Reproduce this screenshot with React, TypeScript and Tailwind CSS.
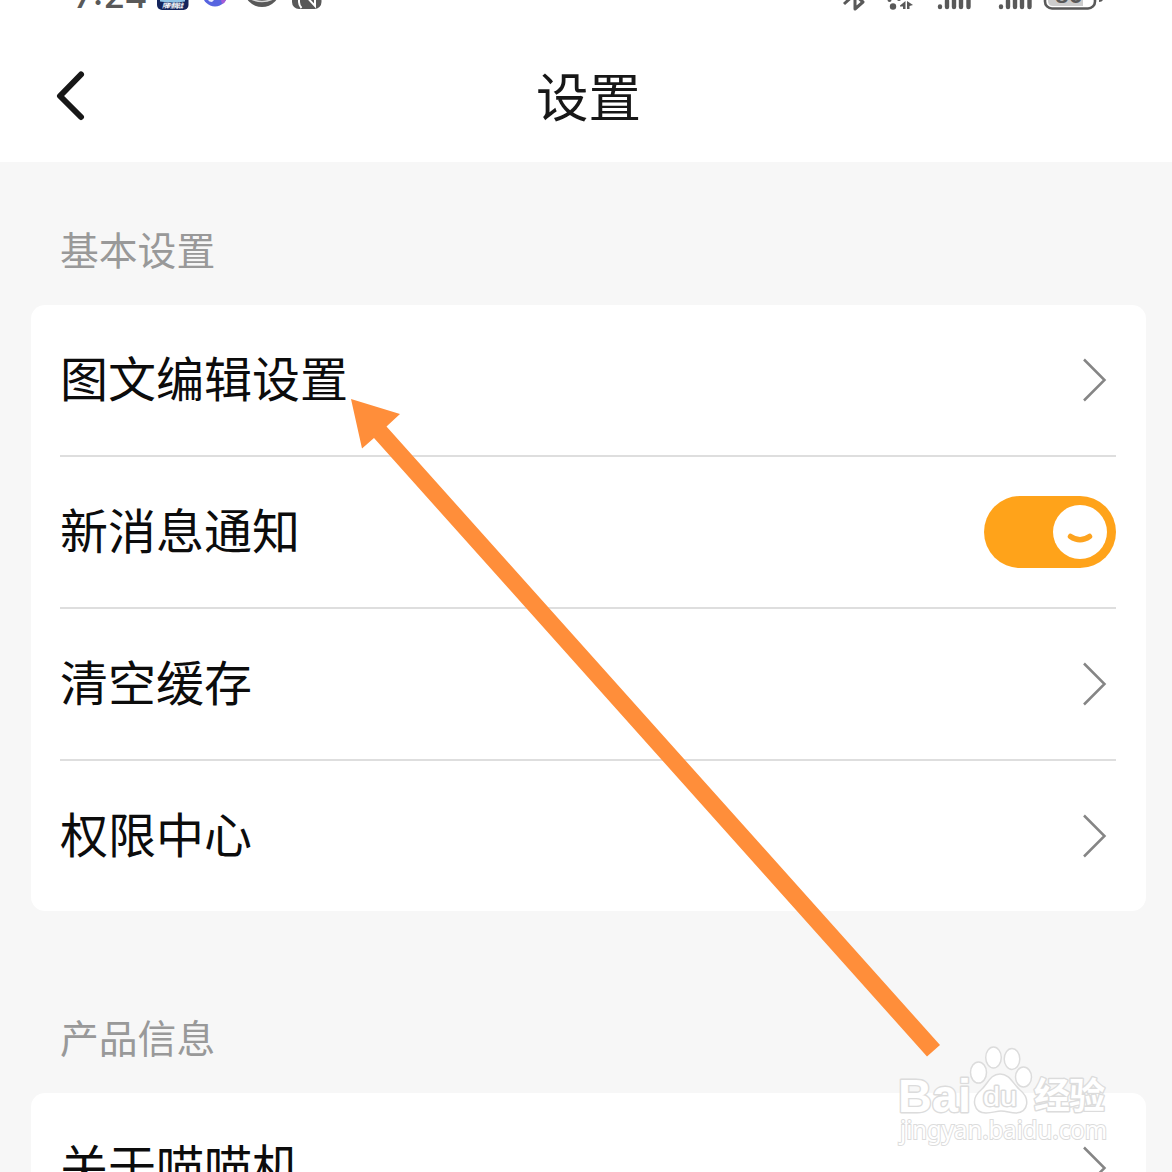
import type { ReactNode } from 'react';

function StatusBar() {
    return (
        <div className="flex h-[30px] shrink-0 justify-between overflow-hidden pl-[74px] pr-[68px] text-[#595959]">
            <div className="flex">
                <span className="-mt-[38px] w-[83px] whitespace-nowrap font-['Inter','Noto_Sans',sans-serif] text-[35px] font-medium leading-[66px]">
                    7:24
                </span>
                <svg width="166" height="30" viewBox="157 0 166 30">
                    <rect x="157" y="-22" width="31.500" height="32" rx="5" fill="#14245c" />
                    <path d="M160 0h25v1.500q-12 2-25 0z" fill="#8fc3e6" />
                    <text x="162" y="8" fontSize="6.500" fontWeight="700" fontStyle="italic" fill="#fff" fontFamily="Noto Sans CJK SC, sans-serif" textLength="21">
                        限时挑战
                    </text>
                    <circle cx="215" cy="-6" r="12.500" fill="#5764e0" />
                    <path d="M208 0h6l-2 2q-3 0-4-2z" fill="#e9ecff" />
                    <path d="M221 0h5q-1 3-4 4z" fill="#a45bd6" />
                    <circle cx="262" cy="-11" r="18" fill="#595959" />
                    <path d="M251 -1q11 5 22 0" fill="none" stroke="#d8d8d8" strokeWidth="1.500" />
                    <rect x="292" y="-20" width="29.500" height="29" rx="7" fill="#595959" />
                    <path d="M299 -6V2q0 3 2.500 6M304 -6L315 6V-6" fill="none" stroke="#fff" strokeWidth="2" />
                </svg>
            </div>
            <svg width="262" height="30" viewBox="842 0 262 30">
                <path d="M844 4L855 -6V9L863 2L855 -5" fill="none" stroke="#595959" strokeWidth="3" strokeLinejoin="round" />
                <g fill="#595959">
                    <circle cx="889.500" cy="0" r="2" />
                    <circle cx="899" cy="-1" r="2" />
                    <circle cx="893" cy="6.500" r="3.200" />
                    <path d="M900 5.500L905.500 1V9H903V6.500H900zM907 1l6 4-3.500 1V9h-2.500z" />
                </g>
                <g stroke="#595959" strokeWidth="4.400" strokeLinecap="round">
                    <path d="M940 6.500v.5M947 1v6M954 -3v10M961 -6v13M968.500 -8V7" />
                    <path d="M1001 6.500v.5M1008 1v6M1015 -3v10M1022 -6v13M1029.500 -8V7" />
                </g>
                <rect x="1045" y="-20" width="50" height="28.500" rx="7" fill="#fff" stroke="#595959" strokeWidth="2.600" />
                <path d="M1048 -5h35v11h-30q-5 0-5-5z" fill="#ccc" />
                <text x="1055" y="2.500" fontSize="21" fontWeight="700" fill="#595959" fontFamily="Inter, sans-serif">
                    80
                </text>
                <path d="M1099 -4h4v4q-1 2-4 2z" fill="#595959" />
            </svg>
        </div>
    );
}

function Chevron() {
    return (
        <svg width="26" height="44" viewBox="0 0 26 44" className="mr-[8px]" fill="none" stroke="#858585" strokeWidth="2.500">
            <path d="M2 1.500L22.500 22L2 42.500" />
        </svg>
    );
}

function Toggle() {
    return (
        <div className="flex h-[72px] w-[132px] items-center justify-end rounded-full bg-[#ffa31a] pr-[9px]">
            <div className="flex size-[54px] items-center justify-center rounded-full bg-white">
                <svg width="26" height="14" viewBox="0 0 26 14" className="mt-[13px]" fill="none" stroke="#fda31f" strokeWidth="5.500" strokeLinecap="round">
                    <path d="M3.500 4.500q9.500 6.500 19 0" />
                </svg>
            </div>
        </div>
    );
}

function SectionTitle({ children }: { children: ReactNode }) {
    return <h2 className="px-[60px] text-[38.800px] leading-[56px] text-[#999]">{children}</h2>;
}

function Row({ label, children, last = false }: { label: string; children: ReactNode; last?: boolean }) {
    return (
        <div className={last ? 'h-[152px]' : 'h-[152px] border-b-2 border-[#dedede]'}>
            <div className="flex h-[150px] items-center justify-between">
                <span className="pb-[8px] text-[48px] leading-[70px] text-[#0c0c0c]">{label}</span>
                {children}
            </div>
        </div>
    );
}

function Arrow() {
    return (
        <svg className="pointer-events-none absolute left-0 top-0" width="1172" height="1172" viewBox="0 0 1172 1172">
            <path d="M351 399L400 414L386.500 426.500L940 1045L927 1056.500L374 438L362 448.500Z" fill="#ff8e3a" />
        </svg>
    );
}

function Watermark() {
    return (
        <svg className="pointer-events-none absolute left-[890px] top-[1036px]" width="230" height="118" viewBox="890 1036 230 118">
            <g fill="#fff" stroke="#dcdcdc" strokeWidth="1.500">
                <ellipse cx="978.500" cy="1072.500" rx="8" ry="10.500" />
                <ellipse cx="993.500" cy="1057.500" rx="7.800" ry="10.500" />
                <ellipse cx="1012" cy="1059" rx="7.800" ry="10.500" />
                <ellipse cx="1023.500" cy="1077" rx="8" ry="10" />
                <path d="M1000 1074C990 1074 988 1084 981 1090C970 1099 974 1113 986 1113C993 1113 996 1111 1001 1111C1007 1111 1010 1113 1016 1113C1029 1112 1030 1098 1020 1090C1013 1084 1010 1074 1000 1074Z" />
                <g strokeWidth="2.800" paintOrder="stroke" strokeLinejoin="round">
                    <text x="898" y="1111.500" fontSize="47" fontWeight="700" fontFamily="Liberation Sans, sans-serif" textLength="73" lengthAdjust="spacingAndGlyphs">
                        Bai
                    </text>
                    <text x="983" y="1106" fontSize="27" fontFamily="Liberation Sans, sans-serif" textLength="34" lengthAdjust="spacingAndGlyphs">
                        du
                    </text>
                    <text x="1034" y="1109" fontSize="36" fontWeight="700" fontFamily="Noto Sans CJK SC, sans-serif" textLength="71">
                        经验
                    </text>
                </g>
                <text x="900" y="1139" fontSize="25" strokeWidth="2" paintOrder="stroke" fontFamily="Noto Sans, sans-serif" textLength="207" lengthAdjust="spacingAndGlyphs">
                    jingyan.baidu.com
                </text>
            </g>
        </svg>
    );
}

export default function App() {
    return (
        <div className="relative flex h-[1172px] w-[1172px] flex-col overflow-hidden bg-[#f7f7f7] font-['Noto_Sans_CJK_SC',sans-serif]">
            <header className="flex h-[162px] shrink-0 flex-col bg-white">
                <StatusBar />
                <div className="grid grid-cols-[1fr_auto_1fr] items-center pl-[5px] pt-[26px]">
                    <svg width="32" height="52" viewBox="0 0 32 52" className="ml-[50px]" fill="none" stroke="#171717" strokeWidth="6" strokeLinecap="round" strokeLinejoin="round">
                        <path d="M26 5.500L5 27L26 48" />
                    </svg>
                    <h1 className="pb-[2px] text-[52.500px] leading-[76px] text-[#171717]">设置</h1>
                </div>
            </header>

            <main className="flex flex-col pt-[58px]">
                <SectionTitle>基本设置</SectionTitle>
                <section className="ml-[31px] mr-[26px] mt-[29px] h-[606px] rounded-[14px] bg-white pl-[29px] pr-[30px]">
                    <Row label="图文编辑设置"><Chevron /></Row>
                    <Row label="新消息通知"><Toggle /></Row>
                    <Row label="清空缓存"><Chevron /></Row>
                    <Row label="权限中心" last><Chevron /></Row>
                </section>

                <div className="pt-[97px]">
                    <SectionTitle>产品信息</SectionTitle>
                </div>
                <section className="ml-[31px] mr-[26px] mt-[29px] rounded-[14px] bg-white pl-[29px] pr-[30px]">
                    <Row label="关于喵喵机" last><Chevron /></Row>
                </section>
            </main>

            <Arrow />
            <Watermark />
        </div>
    );
}
